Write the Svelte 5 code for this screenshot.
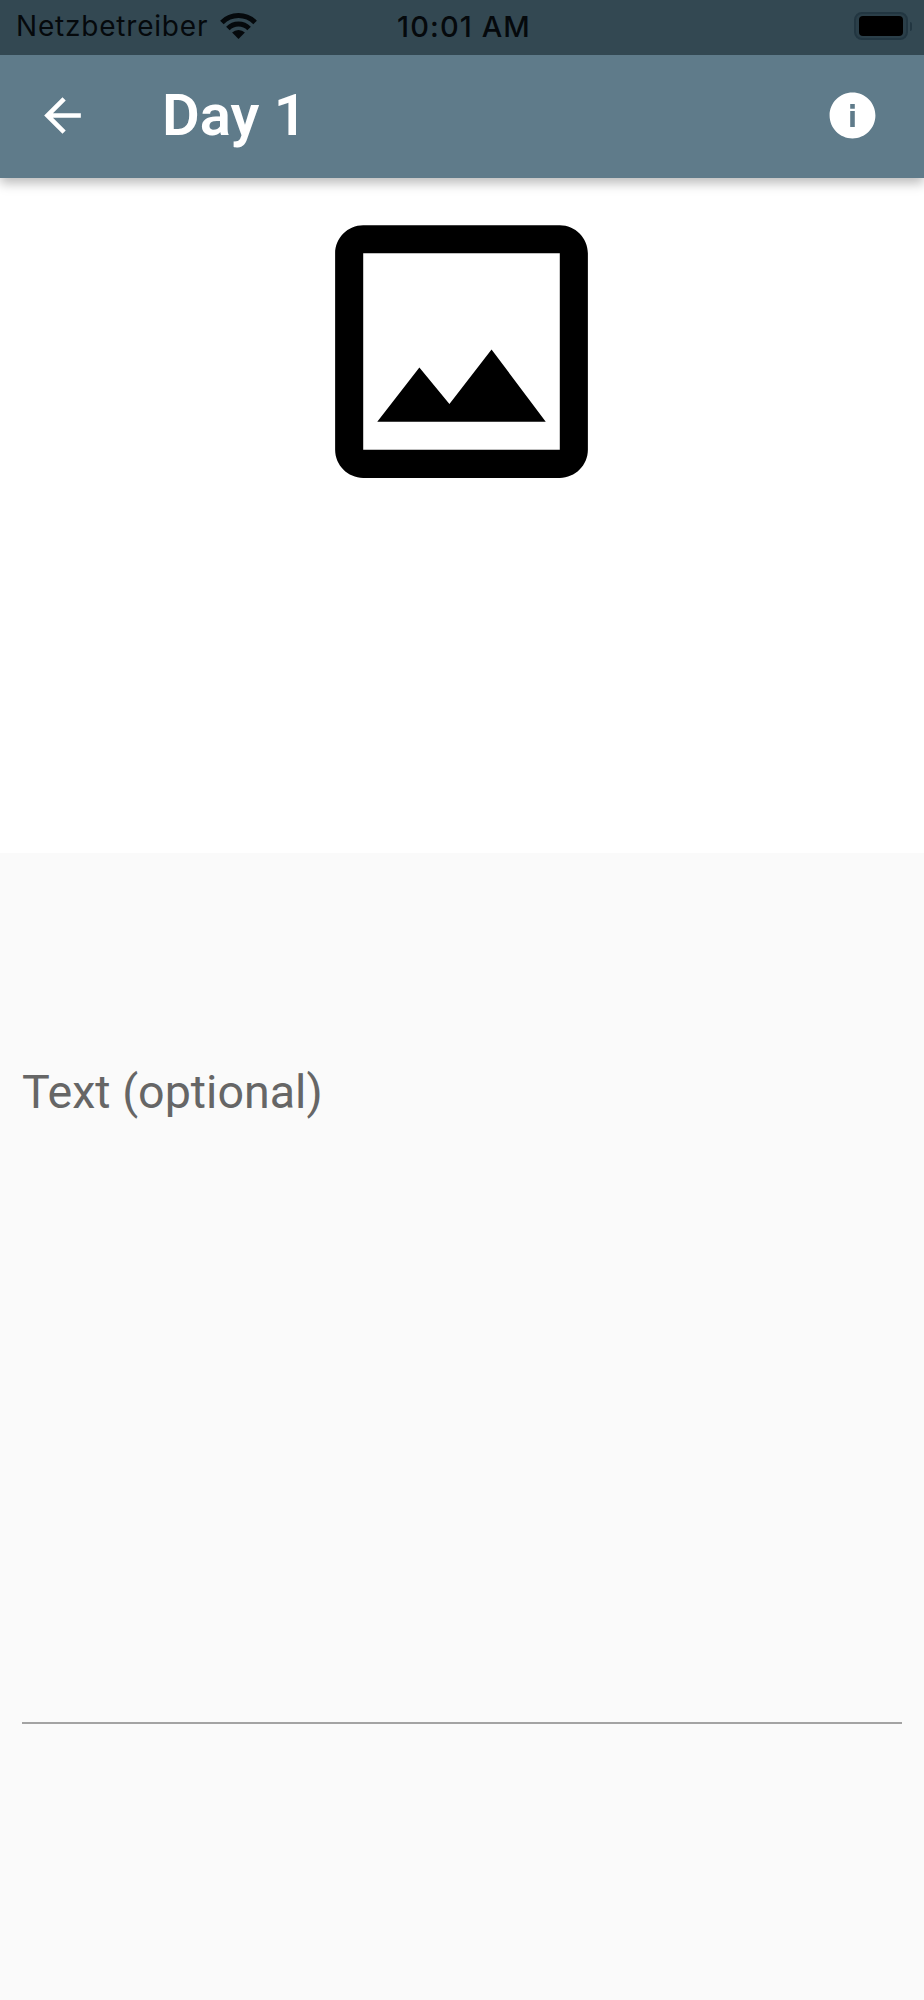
<script lang="ts">
  let title = "Day 1";
  let label = "Text (optional)";
</script>

<div class="screen">
  <header class="top">
    <div class="status">
      <div class="carrier">
        <span>Netzbetreiber</span>
        <svg class="wifi" viewBox="0 0 37 26" width="37" height="26" aria-hidden="true">
          <path class="arc" d="M1.9 9.4A23.5 23.5 0 0 1 35.1 9.4" />
          <path class="arc" d="M7.9 15.4A15 15 0 0 1 29.1 15.4" />
          <path d="M18.5 26L12.1 19.6A9 9 0 0 1 24.9 19.6Z" />
        </svg>
      </div>
      <span class="time">10:01 AM</span>
      <div class="battery-wrap">
        <div class="battery"><div class="level"></div></div>
        <div class="nub"></div>
      </div>
    </div>
    <div class="toolbar">
      <button class="icon-btn" aria-label="Back">
        <svg viewBox="0 0 24 24" width="55" height="55" aria-hidden="true">
          <path d="M20 11H7.83l5.59-5.59L12 4l-8 8 8 8 1.41-1.41L7.83 13H20v-2z" />
        </svg>
      </button>
      <h1>{title}</h1>
      <button class="icon-btn info" aria-label="Info">
        <svg viewBox="0 0 24 24" width="55" height="55" aria-hidden="true">
          <path d="M12 2C6.48 2 2 6.48 2 12s4.48 10 10 10 10-4.48 10-10S17.52 2 12 2zm1 15h-2v-7h2v7zm0-8h-2V7h2v2z" />
        </svg>
      </button>
    </div>
  </header>

  <section class="photo">
    <svg viewBox="0 0 24 24" width="337" height="337" aria-hidden="true">
      <path d="M19 5v14H5V5h14m0-2H5c-1.1 0-2 .9-2 2v14c0 1.1.9 2 2 2h14c1.1 0 2-.9 2-2V5c0-1.1-.9-2-2-2z" />
      <path d="M14.14 11.86l-3 3.87L9 13.14 6 17h12l-3.86-5.14z" />
    </svg>
  </section>

  <section class="form">
    <div class="field">
      <span class="label">{label}</span>
    </div>
  </section>
</div>

<style>
  :global(body) {
    margin: 0;
    background: #fafafa;
  }

  .screen {
    display: flex;
    flex-direction: column;
    height: 2000px;
    font-family: Roboto, "Liberation Sans", sans-serif;
    overflow: hidden;
  }

  .top {
    position: relative;
    z-index: 1;
    box-shadow: 0 5px 11px rgba(0, 0, 0, 0.28);
  }

  .status {
    display: grid;
    grid-template-columns: 1fr auto 1fr;
    align-items: center;
    height: 55px;
    padding: 0 12px 3px 16px;
    background: #334852;
    color: #05090c;
    font-family: Inter, "Liberation Sans", sans-serif;
    font-size: 28px;
    letter-spacing: 0.8px;
    box-sizing: border-box;
  }

  .carrier {
    display: flex;
    align-items: center;
    gap: 12px;
  }

  .wifi {
    fill: #05090c;
  }

  .wifi .arc {
    fill: none;
    stroke: #05090c;
    stroke-width: 5;
  }

  .time {
    font-size: 29px;
    font-weight: 500;
    letter-spacing: 1.1px;
  }

  .battery-wrap {
    display: flex;
    align-items: center;
    justify-content: flex-end;
    gap: 2px;
  }

  .battery {
    width: 54px;
    height: 28px;
    padding: 2px 3px;
    border: 2px solid #223641;
    border-radius: 8px;
    background: #2b3f49;
    box-sizing: border-box;
  }

  .level {
    height: 100%;
    border-radius: 4px;
    background: #000;
  }

  .nub {
    width: 2px;
    height: 9px;
    border-radius: 0 2px 2px 0;
    background: #223641;
  }

  .toolbar {
    display: flex;
    align-items: center;
    height: 123px;
    padding: 0 44px 2px 35px;
    background: #5f7b8a;
    color: #fff;
    box-sizing: border-box;
  }

  .icon-btn {
    display: flex;
    padding: 0;
    border: 0;
    background: none;
    fill: #fff;
  }

  .info {
    margin-left: auto;
  }

  h1 {
    margin: -2px 0 0 72px;
    font-size: 58px;
    font-weight: 600;
    line-height: 1;
  }

  .photo {
    display: flex;
    justify-content: center;
    align-items: flex-start;
    height: 675px;
    padding: 5px 1px 0 0;
    background: #fff;
    box-sizing: border-box;
  }

  .form {
    flex: 1;
    padding: 0 22px;
    background: #fafafa;
  }

  .field {
    height: 871px;
    padding-top: 211px;
    border-bottom: 2px solid #a3a3a3;
    box-sizing: border-box;
  }

  .label {
    display: block;
    color: #666;
    font-size: 46.6px;
    line-height: 56px;
  }
</style>
